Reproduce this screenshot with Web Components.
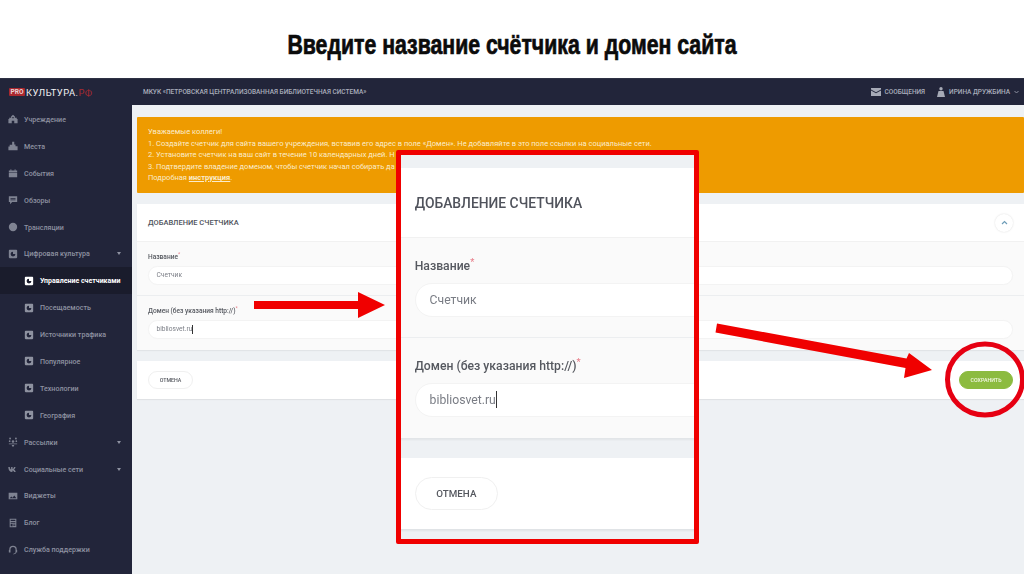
<!DOCTYPE html>
<html lang="ru">
<head>
<meta charset="utf-8">
<title>Добавление счетчика</title>
<style>
  html, body { margin: 0; height: 100%; background: #fff; overflow: hidden; }
  body { font-family: Roboto, "Liberation Sans", sans-serif; width: 1024px; height: 574px; position: relative; }
</style>
</head>
<body>
<slide-title>Введите название счётчика и домен сайта</slide-title>

<app-shell>
  <top-bar slot="top"></top-bar>
  <side-nav slot="side">
    <nav-item icon="home">Учреждение</nav-item>
    <nav-item icon="place">Места</nav-item>
    <nav-item icon="calendar">События</nav-item>
    <nav-item icon="comment">Обзоры</nav-item>
    <nav-item icon="globe">Трансляции</nav-item>
    <nav-item icon="square" arrow>Цифровая культура</nav-item>
    <nav-item icon="square" child active>Управление счетчиками</nav-item>
    <nav-item icon="square" child>Посещаемость</nav-item>
    <nav-item icon="square" child>Источники трафика</nav-item>
    <nav-item icon="square" child>Популярное</nav-item>
    <nav-item icon="square" child>Технологии</nav-item>
    <nav-item icon="square" child>География</nav-item>
    <nav-item icon="mail" arrow>Рассылки</nav-item>
    <nav-item icon="vk" arrow>Социальные сети</nav-item>
    <nav-item icon="image">Виджеты</nav-item>
    <nav-item icon="blog">Блог</nav-item>
    <nav-item icon="headset">Служба поддержки</nav-item>
  </side-nav>
  <alert-box>
    <div>Уважаемые коллеги!</div>
    <div>1. Создайте счетчик для сайта вашего учреждения, вставив его адрес в поле «Домен». Не добавляйте в это поле ссылки на социальные сети.</div>
    <div>2. Установите счетчик на ваш сайт в течение 10 календарных дней. Н</div>
    <div>3. Подтвердите владение доменом, чтобы счетчик начал собирать да</div>
    <div>Подробная <b style="text-decoration:underline;font-weight:700">инструкция</b>.</div>
  </alert-box>
  <form-card></form-card>
</app-shell>

<zoom-callout><form-card nosave></form-card></zoom-callout>
<red-marks></red-marks>

<script>
// small inline icons for the sidebar, all on a 12x12 box
const ICONS = {
  home: '<path fill-rule="evenodd" d="M6 .8 8.300 3v1.500H10.500V6H11.500v5H7.500V8h-3v3H.5V6h1V4.500h2.200V3zM5.200 3.500v1.500h1.600V3.500z"/>',
  place: '<path d="M5 1h2.500v3.200H9v2h2.500V11H.5V6.500H2V4.500h3z"/>',
  calendar: '<path d="M1 3h2V1.500h1V3h4V1.500h1V3h2v2.400H1zM1 6h10v5H1z"/>',
  comment: '<path fill-rule="evenodd" d="M1 1.500h10v7H5L2.500 11V8.500H1zM3 3.500v.9h6v-.9zM3 5.500v.9h6v-.9z"/>',
  globe: '<circle cx="6" cy="6" r="5"/>',
  square: '<path fill-rule="evenodd" d="M2 1h8a1 1 0 0 1 1 1v8a1 1 0 0 1-1 1H2a1 1 0 0 1-1-1V2a1 1 0 0 1 1-1zm4 2.200a2.900 2.900 0 1 0 2.900 2.900H6z"/><path d="M6.800 2.800h2.400v2.400H6.800z"/>',
  mail: '<circle cx="2.500" cy="1.800" r="1.100"/><circle cx="9.500" cy="1.800" r="1.100"/><circle cx="2" cy="5" r="1"/><circle cx="10" cy="5" r="1"/><circle cx="6" cy="5.500" r="1.500"/><path d="M1 7.800h10v1H1zM4.500 9.500h3l-.5 2H5z"/>',
  vk: '<path d="M.3 3.500h1.900c.1 1.800 1 3 1.500 3.100V3.500h1.800v2.400c.7-.1 1.400-1.100 1.700-2.400h1.800c-.3 1.600-1.200 2.600-1.900 3 .7.400 1.800 1.200 2.200 3H7.300c-.3-1-1-1.700-2-1.800v1.800H4.800C2.300 9.500.5 7.400.3 3.500z"/>',
  image: '<path fill-rule="evenodd" d="M.8 2h10.400v8H.8zM2 8.800h8L7.500 5.500 5.500 8 4 6.500z"/>',
  blog: '<path fill-rule="evenodd" d="M2 .8h8v10.400H2zM3.200 2v1.500h5.600V2zM3.200 4.800v.9h5.600v-.9zM3.200 6.800v3h2.300v-3zM6.300 7v.9h2.500V7zM6.300 8.800v.9h2.500v-.9z"/>',
  headset: '<path d="M6 .8a4.500 4.500 0 0 0-4.500 4.500v.6H1v3h2V5.300a3 3 0 0 1 6 0v3.700h-.5v.6l-2 .8v.9L9.500 10.300V9H11V5.900h-.5v-.6A4.500 4.500 0 0 0 6 .8z"/>'
};

class SlideTitle extends HTMLElement {
  constructor() {
    super();
    this.attachShadow({ mode: "open" }).innerHTML = `
      <style>
        :host { display: flex; height: 78px; align-items: center; justify-content: center; background: #fff; padding-top: 12px; box-sizing: border-box; }
        span {
          font: 700 27px "Liberation Sans", Arial, sans-serif;
          color: #0b0b0b;
          white-space: nowrap;
          display: inline-block;
          transform: scaleX(.788);
          -webkit-text-stroke: .7px #0b0b0b;
        }
      </style>
      <span><slot></slot></span>`;
  }
}

class AppShell extends HTMLElement {
  constructor() {
    super();
    this.attachShadow({ mode: "open" }).innerHTML = `
      <style>
        :host { display: flex; flex-direction: column; height: 496px; background: #eef1f4; filter: blur(.3px); }
        .below { display: flex; flex: 1; min-height: 0; }
        main { flex: 1; padding: 12px 0 0 5px; display: flex; flex-direction: column; gap: 11px; min-width: 0; }
      </style>
      <slot name="top"></slot>
      <div class="below">
        <slot name="side"></slot>
        <main><slot></slot></main>
      </div>`;
  }
}

class TopBar extends HTMLElement {
  constructor() {
    super();
    this.attachShadow({ mode: "open" }).innerHTML = `
      <style>
        :host { display: flex; align-items: center; height: 27px; background: #22253a; border-top: 1px solid #2e3144; box-sizing: border-box; color: #a9adba; font-size: 6.5px; font-weight: 500; }
        .logo { width: 143px; box-sizing: border-box; padding-left: 9px; display: flex; align-items: center; font-size: 9.4px; font-weight: 400; color: #f2f2f4; letter-spacing: .45px; }
        .pro { background: #a9282f; color: #e9d3d5; font-size: 6.6px; font-weight: 700; line-height: 8px; padding: 0 1.500px; border-radius: 1px; margin-right: 1px; letter-spacing: 0; }
        .rf { color: #a82a31; }
        .org { flex: 1; }
        .link { display: flex; align-items: center; gap: 3px; }
        .msg { margin-right: 12px; }
        .user { margin-right: 5px; gap: 4px; }
        svg { display: block; fill: #a6aab6; }
        .chev { fill: none; stroke: #8c90a0; stroke-width: 1; }
      </style>
      <div class="logo"><span class="pro">PRO</span>КУЛЬТУРА.<span class="rf">РФ</span></div>
      <div class="org">МКУК «ПЕТРОВСКАЯ ЦЕНТРАЛИЗОВАННАЯ БИБЛИОТЕЧНАЯ СИСТЕМА»</div>
      <div class="link msg">
        <svg width="10" height="8" viewBox="0 0 10 8"><path d="M0 0h10v1.500L5 4.200 0 1.500zM0 2.600 5 5.300l5-2.700V8H0z"/></svg>
        <span>СООБЩЕНИЯ</span>
      </div>
      <div class="link user">
        <svg width="8" height="10" viewBox="0 0 8 10"><circle cx="4" cy="1.800" r="1.700"/><path d="M1.500 4h5L8 10H0z"/></svg>
        <span>ИРИНА ДРУЖБИНА</span>
        <svg class="chev" width="5" height="4" viewBox="0 0 5 4"><path d="M.5 1 2.500 3l2-2"/></svg>
      </div>`;
  }
}

class SideNav extends HTMLElement {
  constructor() {
    super();
    this.attachShadow({ mode: "open" }).innerHTML = `
      <style>
        :host { display: flex; flex-direction: column; flex: 0 0 132px; background: #22253a; padding-top: 1px; box-sizing: border-box; }
      </style>
      <slot></slot>`;
  }
}

class NavItem extends HTMLElement {
  constructor() {
    super();
    const icon = ICONS[this.getAttribute("icon")] || "";
    this.attachShadow({ mode: "open" }).innerHTML = `
      <style>
        :host { display: flex; align-items: center; height: 26.9px; padding-left: 8px; gap: 6px; box-sizing: border-box; color: #8e92a1; font-size: 7.1px; font-weight: 500; position: relative; }
        :host([child]) { padding-left: 24px; gap: 6px; }
        :host([active]) { background: #1a1c2c; color: #fff; font-weight: 700; font-size: 7px; }
        svg { flex: none; display: block; fill: #7f8392; }
        :host([child]) svg { fill: #8e92a0; }
        :host([active]) svg { fill: #fff; }
        .arrow { position: absolute; left: 117px; top: 12px; width: 0; height: 0; border: 2.500px solid transparent; border-top: 3px solid #8e92a1; border-bottom: 0; display: none; }
        :host([arrow]) .arrow { display: block; }
      </style>
      <svg width="10" height="10" viewBox="0 0 12 12">${icon}</svg>
      <slot></slot>
      <i class="arrow"></i>`;
  }
}

class AlertBox extends HTMLElement {
  constructor() {
    super();
    this.attachShadow({ mode: "open" }).innerHTML = `
      <style>
        :host { display: block; height: 76px; box-sizing: border-box; padding: 9px 11px; background: #ee9b00; color: #fbeccb; font-size: 7.5px; line-height: 11.5px; white-space: nowrap; overflow: hidden; border-radius: 1px; }
      </style>
      <slot></slot>`;
  }
}

class FormField extends HTMLElement {
  constructor() {
    super();
    this.attachShadow({ mode: "open" }).innerHTML = `
      <style>
        :host { display: block; height: 54px; box-sizing: border-box; padding: 10px 11px 0; border-bottom: 1px solid #eceef0; }
        label { display: block; font-size: 6.6px; line-height: 10px; height: 14px; font-weight: 500; color: #55585f; }
        sup { color: #e8808c; font-size: 5px; line-height: 0; }
        .input { height: 18.5px; box-sizing: border-box; border: 1px solid #f3f3f3; border-radius: 9.25px; background: #fff; padding-left: 7.5px; display: flex; align-items: center; font-size: 6.6px; color: #7a7d85; }
        .caret { display: none; width: .6px; height: 9px; background: #333; }
        :host([caret]) .caret { display: block; }
      </style>
      <label>${this.getAttribute("label")}<sup>*</sup></label>
      <div class="input"><slot></slot><i class="caret"></i></div>`;
  }
}

class PillButton extends HTMLElement {
  constructor() {
    super();
    this.attachShadow({ mode: "open" }).innerHTML = `
      <style>
        :host { display: flex; align-items: center; justify-content: center; width: 45px; height: 18px; box-sizing: border-box; border: 1px solid #f0f0f0; border-radius: 9px; background: #fff; color: #55585f; font-size: 5.300px; font-weight: 500; }
        :host([save]) { width: 54px; background: #8cbb40; border-color: #8cbb40; color: #f3f8e6; }
      </style>
      <slot></slot>`;
  }
}

class FormCard extends HTMLElement {
  constructor() {
    super();
    this.attachShadow({ mode: "open" }).innerHTML = `
      <style>
        :host { display: flex; flex-direction: column; gap: 11px; }
        .panel { background: #fafafa; box-shadow: 0 1px 1px rgba(0,0,0,.05); }
        header { height: 38px; background: #fff; padding: 0 11px; display: flex; align-items: center; justify-content: space-between; border-bottom: 1px solid #f1f1f1; box-sizing: border-box; font-size: 7.500px; font-weight: 500; color: #50535c; }
        .toggle { width: 18px; height: 18px; border-radius: 50%; background: #fff; box-shadow: 0 0 2px rgba(0,0,0,.15); display: flex; align-items: center; justify-content: center; }
        .toggle svg { display: block; fill: none; stroke: #6e9db8; stroke-width: 1.200; }
        form-field:last-child { border-bottom: 0; }
        .actions { height: 38px; background: #fff; box-sizing: border-box; padding: 0 11px; display: flex; align-items: center; justify-content: space-between; box-shadow: 0 1px 1px rgba(0,0,0,.06); }
        :host([nosave]) pill-button[save], :host([nosave]) .toggle { display: none; }
      </style>
      <div class="panel">
        <header>
          <span>ДОБАВЛЕНИЕ СЧЕТЧИКА</span>
          <span class="toggle"><svg width="7" height="5" viewBox="0 0 7 5"><path d="M1 4 3.500 1.500 6 4"/></svg></span>
        </header>
        <form-field label="Название">Счетчик</form-field>
        <form-field label="Домен (без указания http://)" caret>bibliosvet.ru</form-field>
      </div>
      <div class="actions">
        <pill-button>ОТМЕНА</pill-button>
        <pill-button save>СОХРАНИТЬ</pill-button>
      </div>`;
  }
}

// the enlarged piece of the form, framed in red, lies over the page
class ZoomCallout extends HTMLElement {
  constructor() {
    super();
    this.attachShadow({ mode: "open" }).innerHTML = `
      <style>
        :host { position: absolute; left: 396px; top: 150px; width: 303px; height: 394px; box-sizing: border-box; border: 5px solid #f00000; border-radius: 2px; background: #eef1f4; overflow: hidden; padding-top: 13px; }
        ::slotted(form-card) { zoom: 1.85; width: 500px; margin-left: -3.600px; filter: blur(.2px); }
      </style>
      <slot></slot>`;
  }
}

class RedMarks extends HTMLElement {
  constructor() {
    super();
    this.attachShadow({ mode: "open" }).innerHTML = `
      <style>
        :host { position: absolute; left: 0; top: 0; width: 1024px; height: 574px; pointer-events: none; }
        svg { display: block; }
      </style>
      <svg width="1024" height="574" viewBox="0 0 1024 574">
        <path fill="#f00000" d="M254 301h104v-9l27 13-27 13v-9H254z"/>
        <path fill="#f00000" d="M717 323.500 906.500 358.500 909 353 932 370 904 378 905.500 368 715.500 332.500z"/>
        <ellipse cx="985" cy="379.500" rx="37.500" ry="35.500" fill="none" stroke="#e60012" stroke-width="5"/>
      </svg>`;
  }
}

customElements.define("slide-title", SlideTitle);
customElements.define("app-shell", AppShell);
customElements.define("top-bar", TopBar);
customElements.define("side-nav", SideNav);
customElements.define("nav-item", NavItem);
customElements.define("alert-box", AlertBox);
customElements.define("form-field", FormField);
customElements.define("pill-button", PillButton);
customElements.define("form-card", FormCard);
customElements.define("zoom-callout", ZoomCallout);
customElements.define("red-marks", RedMarks);
</script>
</body>
</html>
